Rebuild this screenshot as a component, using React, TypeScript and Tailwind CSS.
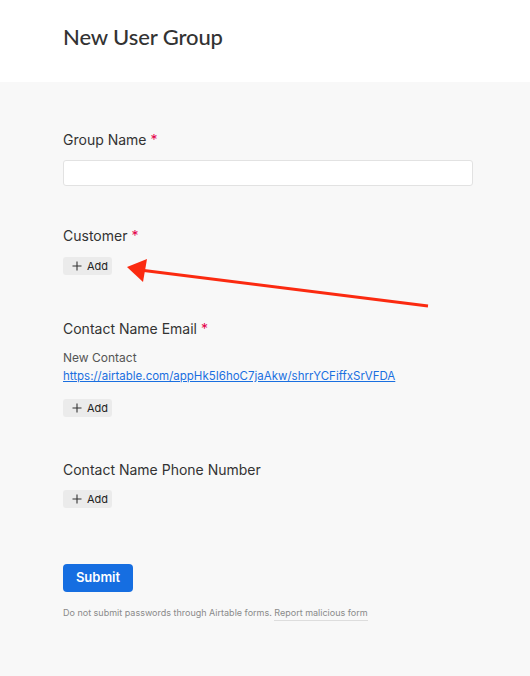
import React from "react";

const Label: React.FC<{text: string; required?: boolean}> = ({text, required}) => (
  <div className="h-5 text-[14px] leading-5 text-[#333]">
    {text}
    {required && <span className="ml-1 text-[#e4004b]">*</span>}
  </div>
);

const AddButton: React.FC<{className?: string}> = ({className}) => (
  <button
    className={
      "flex h-[18px] w-[49px] items-center gap-[5px] rounded-[3px] bg-[#ebebeb] pl-[9px] text-[11px] text-[#222] " +
      (className || "")
    }
  >
    <svg width="10" height="10" viewBox="0 0 10 10">
      <path d="M5 0.5v9M0.5 5h9" stroke="#333" strokeWidth="1.1" />
    </svg>
    <span>Add</span>
  </button>
);

export default function App() {
  return (
    <div
      className="relative min-h-[676px] w-[530px] bg-[#f8f8f8]"
      style={{fontFamily: "Inter, 'Liberation Sans', sans-serif"}}
    >
      {/* header */}
      <div className="flex h-[82px] items-center bg-white pb-[10px] pl-[63px]">
        <h1
          className="text-[22px] font-medium text-[#333]"
          style={{fontFamily: "Lato, 'Noto Sans', sans-serif", letterSpacing: "-0.1px"}}
        >
          New User Group
        </h1>
      </div>

      {/* form */}
      <div className="px-[63px] pt-[48px]">
        <Label text="Group Name" required />
        <input className="mt-[10px] block h-[26px] w-[410px] rounded-[3px] border border-[#e2e2e2] bg-white" />

        <div className="mt-[40px]">
          <Label text="Customer" required />
          <AddButton className="mt-[11px]" />
        </div>

        <div className="mt-[44px]">
          <Label text="Contact Name Email" required />
          <div className="mt-[10px] text-[12px] leading-[18px] text-[#555]">New Contact</div>
          <a
            href="#"
            className="block text-[11.5px] leading-[18px] text-[#1a6fe0] underline"
          >
            https://airtable.com/appHk5I6hoC7jaAkw/shrrYCFiffxSrVFDA
          </a>
          <AddButton className="mt-[14px]" />
        </div>

        <div className="mt-[43px]">
          <Label text="Contact Name Phone Number" />
          <AddButton className="mt-[10px]" />
        </div>

        <button className="mt-[56px] h-[28px] w-[70px] rounded-[4px] bg-[#166ee1] text-[13px] font-semibold text-white">
          Submit
        </button>

        <div className="mt-[14px] text-[9px] text-[#8a8a8a]">
          Do not submit passwords through Airtable forms.{" "}
          <span className="border-b border-[#ddd] pb-[2px]">Report malicious form</span>
        </div>
      </div>

      {/* annotation arrow */}
      <svg
        className="pointer-events-none absolute left-0 top-0"
        width="530"
        height="676"
        viewBox="0 0 530 676"
      >
        <line x1="428" y1="306" x2="140" y2="270" stroke="#fb2a10" strokeWidth="3.2" />
        <polygon points="127,267 147,259 143,282" fill="#fb2a10" />
      </svg>
    </div>
  );
}
